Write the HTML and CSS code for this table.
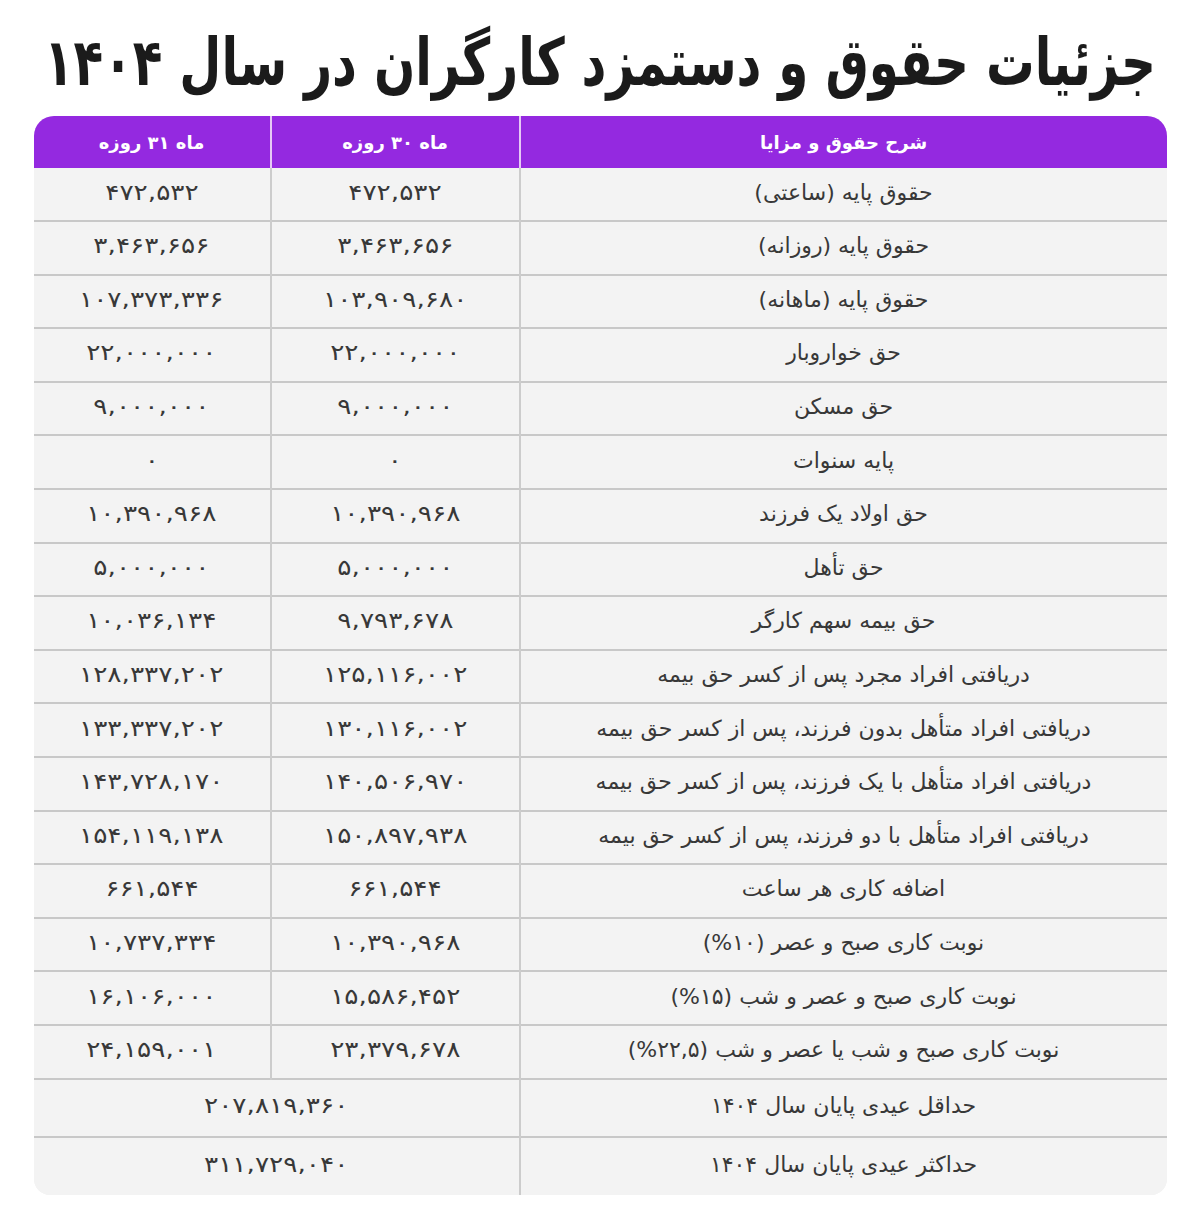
FILE: index.html
```html
<!DOCTYPE html>
<html lang="fa" dir="rtl">
<head>
<meta charset="utf-8">
<title>جزئیات حقوق و دستمزد کارگران در سال ۱۴۰۴</title>
<link rel="stylesheet" href="styles.css">
</head>
<body>
<div class="page">
  <h1 class="title"><span class="title-text">جزئیات حقوق و دستمزد کارگران در سال ۱۴۰۴</span></h1>
  <div class="table-wrap">
    <table class="salary">
      <colgroup>
        <col class="c-desc">
        <col class="c-30">
        <col class="c-31">
      </colgroup>
      <thead>
        <tr>
          <th>شرح حقوق و مزایا</th>
          <th>ماه ۳۰ روزه</th>
          <th>ماه ۳۱ روزه</th>
        </tr>
      </thead>
      <tbody>
        <tr><td>حقوق پایه (ساعتی)</td><td><span class="num">۴۷۲,۵۳۲</span></td><td><span class="num">۴۷۲,۵۳۲</span></td></tr>
        <tr><td>حقوق پایه (روزانه)</td><td><span class="num">۳,۴۶۳,۶۵۶</span></td><td><span class="num">۳,۴۶۳,۶۵۶</span></td></tr>
        <tr><td>حقوق پایه (ماهانه)</td><td><span class="num">۱۰۳,۹۰۹,۶۸۰</span></td><td><span class="num">۱۰۷,۳۷۳,۳۳۶</span></td></tr>
        <tr><td>حق خواروبار</td><td><span class="num">۲۲,۰۰۰,۰۰۰</span></td><td><span class="num">۲۲,۰۰۰,۰۰۰</span></td></tr>
        <tr><td>حق مسکن</td><td><span class="num">۹,۰۰۰,۰۰۰</span></td><td><span class="num">۹,۰۰۰,۰۰۰</span></td></tr>
        <tr><td>پایه سنوات</td><td><span class="num">۰</span></td><td><span class="num">۰</span></td></tr>
        <tr><td>حق اولاد یک فرزند</td><td><span class="num">۱۰,۳۹۰,۹۶۸</span></td><td><span class="num">۱۰,۳۹۰,۹۶۸</span></td></tr>
        <tr><td>حق تأهل</td><td><span class="num">۵,۰۰۰,۰۰۰</span></td><td><span class="num">۵,۰۰۰,۰۰۰</span></td></tr>
        <tr><td>حق بیمه سهم کارگر</td><td><span class="num">۹,۷۹۳,۶۷۸</span></td><td><span class="num">۱۰,۰۳۶,۱۳۴</span></td></tr>
        <tr><td>دریافتی افراد مجرد پس از کسر حق بیمه</td><td><span class="num">۱۲۵,۱۱۶,۰۰۲</span></td><td><span class="num">۱۲۸,۳۳۷,۲۰۲</span></td></tr>
        <tr><td>دریافتی افراد متأهل بدون فرزند، پس از کسر حق بیمه</td><td><span class="num">۱۳۰,۱۱۶,۰۰۲</span></td><td><span class="num">۱۳۳,۳۳۷,۲۰۲</span></td></tr>
        <tr><td>دریافتی افراد متأهل با یک فرزند، پس از کسر حق بیمه</td><td><span class="num">۱۴۰,۵۰۶,۹۷۰</span></td><td><span class="num">۱۴۳,۷۲۸,۱۷۰</span></td></tr>
        <tr><td>دریافتی افراد متأهل با دو فرزند، پس از کسر حق بیمه</td><td><span class="num">۱۵۰,۸۹۷,۹۳۸</span></td><td><span class="num">۱۵۴,۱۱۹,۱۳۸</span></td></tr>
        <tr><td>اضافه کاری هر ساعت</td><td><span class="num">۶۶۱,۵۴۴</span></td><td><span class="num">۶۶۱,۵۴۴</span></td></tr>
        <tr><td>نوبت کاری صبح و عصر (۱۰%)</td><td><span class="num">۱۰,۳۹۰,۹۶۸</span></td><td><span class="num">۱۰,۷۳۷,۳۳۴</span></td></tr>
        <tr><td>نوبت کاری صبح و عصر و شب (۱۵%)</td><td><span class="num">۱۵,۵۸۶,۴۵۲</span></td><td><span class="num">۱۶,۱۰۶,۰۰۰</span></td></tr>
        <tr><td>نوبت کاری صبح و شب یا عصر و شب (۲۲,۵%)</td><td><span class="num">۲۳,۳۷۹,۶۷۸</span></td><td><span class="num">۲۴,۱۵۹,۰۰۱</span></td></tr>
        <tr class="tall"><td>حداقل عیدی پایان سال ۱۴۰۴</td><td colspan="2"><span class="num">۲۰۷,۸۱۹,۳۶۰</span></td></tr>
        <tr class="tall"><td>حداکثر عیدی پایان سال ۱۴۰۴</td><td colspan="2"><span class="num">۳۱۱,۷۲۹,۰۴۰</span></td></tr>
      </tbody>
    </table>
  </div>
</div>
</body>
</html>
```

FILE: styles.css
```css
html, body {
  margin: 0;
  padding: 0;
  background: #ffffff;
}

body {
  font-family: "DejaVu Sans", "Noto Sans", sans-serif;
  color: #333333;
}

.page {
  width: 1133px;
  margin: 0 auto;
  padding: 0;
}

.title {
  margin: 0;
  height: 116px;
  display: flex;
  align-items: center;
  justify-content: center;
  font-size: 48.5px;
  font-weight: 900;
  color: #1b1b1b;
  line-height: 1;
  white-space: nowrap;
}

.title-text {
  display: inline-block;
  transform: scaleY(1.35);
  margin-top: 8px;
}

.table-wrap {
  border-radius: 20px 20px 16px 16px;
  overflow: hidden;
  background: #f3f3f3;
}

.salary {
  width: 100%;
  border-collapse: collapse;
  table-layout: fixed;
}

.c-desc { width: 647px; }
.c-30 { width: 249px; }
.c-31 { width: 237px; }

.salary th {
  background: #9429e0;
  color: #ffffff;
  font-size: 18px;
  font-weight: 700;
  height: 52px;
  padding: 0;
  text-align: center;
  border-left: 2px solid #e6c8f5;
}

.salary th:last-child { border-left: none; }

.salary td {
  box-sizing: border-box;
  height: 53.6px;
  padding: 0 0 4px 0;
  text-align: center;
  font-size: 22px;
  font-weight: 400;
  color: #383838;
  background: #f3f3f3;
  border-top: 2px solid #c8c8c8;
  border-left: 2px solid #cccccc;
}

.num {
  display: inline-block;
  transform: scaleX(1.2);
}

.salary tbody tr:first-child td { border-top: none; height: 53px; }

.salary td:last-child { border-left: none; }

.salary tr.tall td { height: 58px; }
```
